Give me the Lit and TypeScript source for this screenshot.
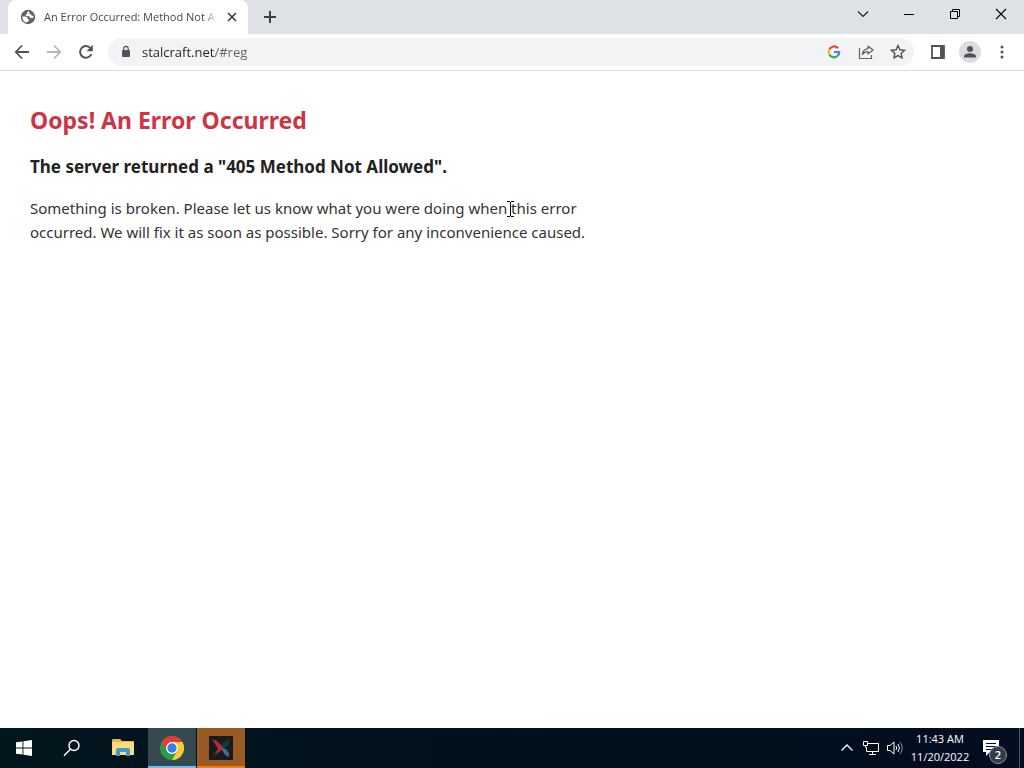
import { LitElement, html, css } from "lit";
import { customElement } from "lit/decorators.js";

@customElement("browser-tabs")
class BrowserTabs extends LitElement {
  static styles = css`
    :host { display: block; font-family: "Open Sans", "Noto Sans", sans-serif; }
    .strip { display: flex; height: 34px; background: #dee1e6; padding-left: 8px; }
    .tab { display: flex; align-items: center; width: 240px; box-sizing: border-box; background: #fff; border-radius: 8px 8px 0 0; padding: 0 8px 0 12px; }
    .title { flex: 1; min-width: 0; margin: 0 7px 0 8px; font-size: 11px; line-height: 16px; color: #45494d; white-space: nowrap; overflow: hidden; mask-image: linear-gradient(to right, #000 92%, transparent); }
    button { display: grid; place-items: center; padding: 0; border: 0; background: none; }
    .close { width: 16px; height: 16px; }
    .add { width: 28px; margin-left: 8px; }
    .spacer { flex: 1; }
    .win { width: 46px; height: 28px; }
    svg { display: block; }
  `;
  render() {
    return html`<div class="strip">
      <div class="tab">
        <svg width="16" height="16" viewBox="0 0 16 16"><circle cx="8" cy="8" r="7.200" fill="#5f6368"/><path d="M2.300 7.400h3.200l1.900 1 .3 1.600 1.300.4-.2 1.300-2.200 1.900C3.800 13 2.200 10.600 2.300 7.400z" fill="#fff"/><path d="M8.600 2.300 7 3.600l.2 1.500-1.700.6.6 1.200 3 .3 1.300 1.700 1.800.3 1.500-1.100c.2-2.800-2-5.500-5.100-5.800z" fill="#fff"/><path d="M8.800 1.600 9.500 3l-.7 1.300 1.700.8 1.500 1.600 2.100.2-1-3.300z" fill="#5f6368"/></svg>
        <span class="title">An Error Occurred: Method Not Allowed</span>
        <button class="close" aria-label="Close tab"><svg width="16" height="16" viewBox="0 0 16 16"><path d="m4 4 8 8M12 4l-8 8" stroke="#3c4043" stroke-width="1.700"/></svg></button>
      </div>
      <button class="add" aria-label="New tab"><svg width="14" height="14" viewBox="0 0 14 14"><path d="M7 1v12M1 7h12" stroke="#3c4043" stroke-width="2"/></svg></button>
      <div class="spacer"></div>
      <button class="win" aria-label="Search tabs"><svg width="12" height="12" viewBox="0 0 12 12"><path d="m1 3.500 5 5 5-5" fill="none" stroke="#222" stroke-width="1.200"/></svg></button>
      <button class="win" aria-label="Minimize"><svg width="10" height="10" viewBox="0 0 10 10"><path d="M0 5.500h10" stroke="#000"/></svg></button>
      <button class="win" aria-label="Restore"><svg width="10" height="10" viewBox="0 0 10 10"><path d="M.5 2.500h7v7h-7zM2.500 2.500v-2h7v7h-2" fill="none" stroke="#000"/></svg></button>
      <button class="win" aria-label="Close"><svg width="12" height="12" viewBox="0 0 12 12"><path d="m1 1 10 10M11 1 1 11" stroke="#000" stroke-width="1.100"/></svg></button>
    </div>`;
  }
}

@customElement("browser-toolbar")
class BrowserToolbar extends LitElement {
  static styles = css`
    :host { display: block; font-family: "Open Sans", "Noto Sans", sans-serif; }
    .bar { display: flex; align-items: center; height: 36px; padding: 0 6px; border-bottom: 1px solid #dadce0; background: #fff; }
    button { display: grid; place-items: center; width: 32px; height: 28px; padding: 0; border: 0; background: none; flex: none; }
    .box { flex: 1; display: flex; align-items: center; height: 28px; border-radius: 14px; background: #f1f3f4; margin: 0 8px 0 6px; padding-left: 10px; min-width: 0; }
    .box label { display: flex; padding: 0 8px 0 0; }
    input { flex: 1; min-width: 0; padding: 0 0 0 1px; border: 0; outline: 0; font: 13px/20px "Open Sans", "Noto Sans", sans-serif; color: #202124; -webkit-text-fill-color: transparent; background: linear-gradient(to right, #202124 74px, #5f6368 74px) text; }
    .avatar { width: 22px; height: 22px; border-radius: 50%; background: #dadce0; margin: 0 5px; }
    svg { display: block; }
  `;
  render() {
    return html`<div class="bar">
      <button aria-label="Back"><svg width="16" height="16" viewBox="0 0 16 16"><path d="M15 8H2M8 1.500 1.800 8 8 14.500" fill="none" stroke="#50545a" stroke-width="1.800"/></svg></button>
      <button aria-label="Forward"><svg width="16" height="16" viewBox="0 0 16 16"><path d="M1 8h13M8 1.500 14.200 8 8 14.500" fill="none" stroke="#b4b6b9" stroke-width="1.800"/></svg></button>
      <button aria-label="Reload"><svg width="16" height="16" viewBox="0 0 16 16"><path d="M13.300 10A5.800 5.800 0 1 1 12.400 4.200" fill="none" stroke="#50545a" stroke-width="2"/><path d="M14.800.8v6.400H8.500z" fill="#50545a"/></svg></button>
      <div class="box">
        <label for="url" aria-label="Address"><svg width="15" height="16" viewBox="0 0 15 16"><rect x="4" y="6" width="8" height="7" rx="1" fill="#50545a"/><path d="M5.800 7V4.500a2.200 2.200 0 0 1 4.400 0V7" fill="none" stroke="#50545a" stroke-width="1.200"/></svg></label>
        <input id="url" type="text" value="stalcraft.net/#reg" />
        <button aria-label="Search with Google"><svg width="14" height="14" viewBox="0 0 14 14" fill="none" stroke-width="2.200"><path d="M11 3.200A5.200 5.200 0 0 0 2.400 4.500" stroke="#ea4335"/><path d="M2.400 4.500a5.200 5.200 0 0 0 0 5" stroke="#fbbc05"/><path d="M2.400 9.500A5.200 5.200 0 0 0 10.400 11" stroke="#34a853"/><path d="M10.400 11A5.200 5.200 0 0 0 12.200 7H7" stroke="#4285f4"/></svg></button>
        <button aria-label="Share"><svg width="16" height="16" viewBox="0 0 16 16" fill="none" stroke="#5f6368" stroke-width="1.200"><path d="M1.500 4v10.500h12V11"/><path d="M10 2.200 15 6l-5 4V7.600c-2.700 0-4.500 1-5.700 3 .2-3.500 2.200-5.600 5.700-6z" stroke-linejoin="round"/></svg></button>
        <button aria-label="Bookmark"><svg width="16" height="16" viewBox="0 0 16 16"><path d="m8 1.600 1.900 4.200 4.600.5-3.400 3.100.9 4.500-4-2.300-4 2.300.9-4.500-3.400-3.100 4.600-.5z" fill="none" stroke="#50545a" stroke-width="1.400"/></svg></button>
      </div>
      <button aria-label="Side panel"><svg width="14" height="14" viewBox="0 0 14 14"><path d="M1 1h12v12H1z" fill="none" stroke="#50545a" stroke-width="1.800"/><path d="M9 1h4v12H9z" fill="#50545a"/></svg></button>
      <button class="avatar" aria-label="Profile"><svg width="14" height="14" viewBox="0 0 14 14" fill="#50545a"><circle cx="7" cy="4" r="3"/><path d="M1 12.500v-1.300C1 9.300 4 8.300 7 8.300s6 1 6 2.900v1.300z"/></svg></button>
      <button aria-label="Menu"><svg width="4" height="14" viewBox="0 0 4 14" fill="#50545a"><circle cx="2" cy="2" r="1.500"/><circle cx="2" cy="7" r="1.500"/><circle cx="2" cy="12" r="1.500"/></svg></button>
    </div>`;
  }
}

@customElement("error-page")
class ErrorPage extends LitElement {
  static styles = css`
    :host { display: block; background: #fff; color: #222; font-family: "Noto Sans", "Open Sans", sans-serif; }
    main { max-width: 640px; box-sizing: border-box; padding: 31px 30px; font-size: 15px; line-height: 24px; }
    h1 { margin: 0; color: #cd3545; font-size: 23px; line-height: 36px; }
    h2 { margin: 17px 0; font-size: 17px; line-height: 24px; }
    p { margin: 0; color: #333; }
    .word { position: relative; }
    .caret { position: absolute; left: 100%; top: 3px; }
  `;
  render() {
    return html`<main>
      <h1>Oops! An Error Occurred</h1>
      <h2>The server returned a "405 Method Not Allowed".</h2>
      <p>Something is broken. Please let us know what you were doing when<span class="word"><svg class="caret" width="7" height="16" viewBox="0 0 7 16"><path d="M0 .5h3M4 .5h3M3.500 1v14M0 15.500h3M4 15.500h3" stroke="#000"/></svg></span> this error occurred. We will fix it as soon as possible. Sorry for any inconvenience caused.</p>
    </main>`;
  }
}

@customElement("task-bar")
class TaskBar extends LitElement {
  static styles = css`
    :host { display: block; font-family: "Open Sans", "Noto Sans", sans-serif; }
    .bar { display: flex; height: 40px; background: linear-gradient(to right, #02161e, #010f1c 70%, #020d20); color: #fff; }
    button { display: grid; place-items: center; width: 48px; padding: 0; border: 0; background: none; color: inherit; font: inherit; flex: none; }
    .files { margin-left: 3px; }
    .chrome { background: #344950; box-shadow: inset 0 -2px #76b9ed; margin-left: 1px; }
    .game { background: #985b26; box-shadow: inset 0 -2px #f77a0c; margin-left: 1px; }
    .spacer { flex: 1; }
    .tray { width: 24px; }
    .clock { width: 66px; font-size: 11px; line-height: 18px; white-space: nowrap; align-content: center; }
    .notes { position: relative; width: 47px; padding-right: 10px; border-right: 1px solid #4a5564; margin-right: 4px; }
    .badge { position: absolute; left: 16px; top: 18px; width: 16px; height: 16px; border-radius: 50%; border: 1px solid #8a929c; background: #333d49; font-size: 11px; line-height: 16px; font-weight: 600; }
    svg { display: block; }
  `;
  render() {
    return html`<div class="bar">
      <button aria-label="Start"><svg width="16" height="16" viewBox="0 0 16 16" fill="#fff"><path d="M0 2.300 6.500 1.400v6.200H0zM7.400 1.300 16 0v7.600H7.400zM0 8.400h6.500v6.200L0 13.700zM7.400 8.400H16V16l-8.600-1.300z"/></svg></button>
      <button aria-label="Search"><svg width="18" height="18" viewBox="0 0 18 18" fill="none" stroke="#fff" stroke-width="1.400"><circle cx="11" cy="6.500" r="5"/><path d="M7.400 10.200 1 16.800"/></svg></button>
      <button class="files" aria-label="File Explorer"><svg width="22" height="20" viewBox="0 0 22 20"><path d="M0 2.500Q0 1 1 1h7l2 2h11q1 0 1 1v13H0z" fill="#e5b64b"/><path d="M0 4h22v13H0z" fill="#fbdb7b"/><path d="M4 18v-6q0-2 2-2h10q2 0 2 2v6h-4v-4H8v4z" fill="#4596ca"/></svg></button>
      <button class="chrome" aria-label="Google Chrome"><svg width="24" height="24" viewBox="0 0 24 24"><circle cx="12" cy="12" r="12" fill="#2a9c48"/><path d="M1.600 6A12 12 0 0 1 22.400 6H12L6.800 15z" fill="#e33b2e"/><path d="M22.400 6A12 12 0 0 1 12 24l5.200-9L12 6z" fill="#fccd31"/><circle cx="12" cy="12" r="6" fill="#fff"/><circle cx="12" cy="12" r="4.700" fill="#397ee8"/></svg></button>
      <button class="game" aria-label="Stalcraft"><svg width="24" height="24" viewBox="0 0 24 24"><path d="M0 0h24v24H0z" fill="#191b20"/><path d="m20 3-6 4-2 4 2 2 6-4zM10 14l-5 3-1 4 7-5z" fill="#123c38"/><path d="m3 3 5 2 6 6-1 3-7 4 3-5z" fill="#b02c38"/><path d="m12 12 5 1 3 4v4l-4-2z" fill="#456c86"/></svg></button>
      <div class="spacer"></div>
      <button class="tray" aria-label="Show hidden icons"><svg width="12" height="12" viewBox="0 0 12 12"><path d="m.5 8.500 5.500-5.500 5.500 5.500" fill="none" stroke="#fff" stroke-width="1.300"/></svg></button>
      <button class="tray" aria-label="Network"><svg width="16" height="14" viewBox="0 0 16 14" fill="none" stroke="#fff"><path d="M5 2.500h10.500v8H3.500V6M9.500 10.500v3M6 13.500h7M.5.500h4v4h-4zM2.500 4.500v2"/></svg></button>
      <button class="tray" aria-label="Volume"><svg width="16" height="14" viewBox="0 0 16 14" fill="none" stroke="#fff"><path d="M.5 4.500h2.500l4-3.500v12L3 9.500H.5z"/><path d="M9 5q1.500 2 0 4M11 3q3 4 0 8"/><path d="M13 1q4.500 6 0 12" stroke="#8b939c"/></svg></button>
      <button class="clock"><span>11:43 AM</span><span>11/20/2022</span></button>
      <button class="notes" aria-label="Notifications"><svg width="16" height="16" viewBox="0 0 16 16"><path d="M0 0h16v12h-9l-4 4v-4H0z" fill="#fff"/><path d="M3 3.500h10M3 6.500h10M3 9.500h6" stroke="#020d20"/></svg><span class="badge">2</span></button>
    </div>`;
  }
}

@customElement("app-root")
class AppRoot extends LitElement {
  static styles = css`
    :host { display: flex; flex-direction: column; min-height: 100vh; }
    error-page { flex: 1; }
  `;
  render() {
    return html`<browser-tabs></browser-tabs><browser-toolbar></browser-toolbar><error-page></error-page><task-bar></task-bar>`;
  }
}
